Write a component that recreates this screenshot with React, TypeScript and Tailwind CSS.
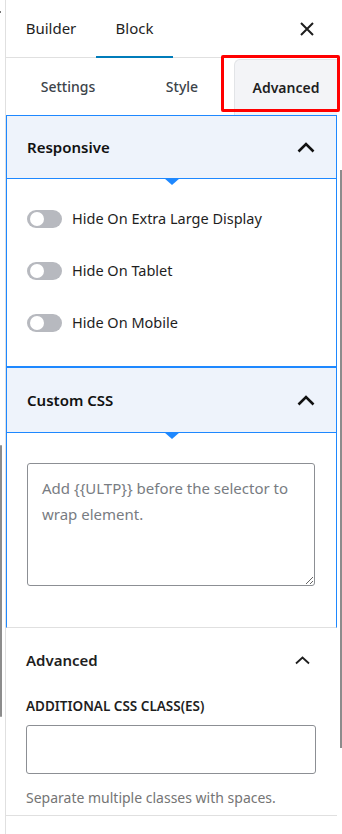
import { useState } from "react";

const toggles = ["Hide On Extra Large Display", "Hide On Tablet", "Hide On Mobile"];

function ChevronUp({ thin }: { thin?: boolean }) {
  if (thin) {
    return (
      <svg width="15" height="9" viewBox="0 0 15 9" fill="none">
        <polyline points="1,7.5 7.5,1.5 14,7.5" stroke="#1e1e1e" strokeWidth="1.8" />
      </svg>
    );
  }
  return (
    <svg width="18" height="11" viewBox="0 0 18 11" fill="none">
      <polyline points="1.5,9.5 9,2 16.5,9.5" stroke="#111" strokeWidth="2.6" />
    </svg>
  );
}

function Caret() {
  return (
    <div className="absolute top-full left-1/2 -translate-x-1/2 w-0 h-0 border-l-[8px] border-r-[8px] border-t-[7px] border-l-transparent border-r-transparent border-t-[#1e88ff]" />
  );
}

function Toggle({ label }: { label: string }) {
  const [on, setOn] = useState(false);
  return (
    <div className="flex items-center h-[18px]">
      <button
        onClick={() => setOn(!on)}
        className={`relative w-[35px] h-[18px] rounded-full ${on ? "bg-[#1e88ff]" : "bg-[#b7b9bf]"}`}
      >
        <span
          className={`absolute top-[2px] w-[14px] h-[14px] rounded-full bg-white ${on ? "left-[19px]" : "left-[3px]"}`}
        />
      </button>
      <span className="ml-[10px] text-[14.5px] text-[#1e1e1e]">{label}</span>
    </div>
  );
}

export default function App() {
  return (
    <div className="relative w-[342px] h-[834px] bg-white overflow-hidden font-['Noto_Sans',sans-serif] text-[#1e1e1e]">
      <div className="flex h-full">
        {/* left gutter */}
        <div className="w-[5px] flex flex-col">
          <div className="mt-[11px] h-[2px] w-[1px] bg-[#777]" />
          <div className="mt-[432px] h-[272px] w-[2px] bg-[#8c8c8c] rounded-sm" />
        </div>

        {/* main panel */}
        <div className="w-[332px] border-l border-[#e0e0e0] flex flex-col">
          {/* header */}
          <div className="h-[58px] border-b border-[#e0e0e0] flex items-stretch">
            <div className="w-[90px] flex items-center justify-center text-[15px] text-[#1e1e1e]">Builder</div>
            <div className="w-[77px] flex items-center justify-center text-[15px] text-[#1e1e1e] border-b-2 border-[#007cba] -mb-px">
              Block
            </div>
            <div className="flex-1 flex items-center justify-end pr-[23px]">
              <svg width="14" height="14" viewBox="0 0 14 14" fill="none">
                <path d="M1 1L13 13M13 1L1 13" stroke="#1e1e1e" strokeWidth="2" />
              </svg>
            </div>
          </div>

          {/* tabs */}
          <div className="h-[57px] flex items-stretch">
            <div className="w-[124px] flex items-center justify-center text-[14px] font-medium text-[#3c434a]">Settings</div>
            <div className="w-[104px] flex items-center justify-center text-[14px] font-medium text-[#3c434a]">Style</div>
            <div className="flex-1 mt-px flex items-center justify-center text-[14px] font-semibold text-[#1e1e1e] bg-[#f3f4f7] border-l border-t border-[#e2e4e7] rounded-tl-md">
              Advanced
            </div>
          </div>

          {/* Responsive */}
          <div className="w-[331px] border border-[#1e88ff] flex flex-col">
            <div className="relative h-[63px] bg-[#eef3fb] border-b border-[#1e88ff] flex items-center justify-between pl-[20px] pr-[21px]">
              <span className="text-[15px] font-semibold text-[#111]">Responsive</span>
              <ChevronUp />
              <Caret />
            </div>
            <div className="h-[187px] flex flex-col gap-[34px] pt-[31px] pl-[20px]">
              {toggles.map((t) => (
                <Toggle key={t} label={t} />
              ))}
            </div>
          </div>

          {/* Custom CSS */}
          <div className="w-[331px] border-l border-r border-t border-[#1e88ff] border-b border-b-[#e0e0e0] flex flex-col">
            <div className="relative h-[65px] bg-[#eef3fb] border-b border-[#1e88ff] flex items-center justify-between pl-[20px] pr-[21px]">
              <span className="text-[15px] font-semibold text-[#111]">Custom CSS</span>
              <ChevronUp />
              <Caret />
            </div>
            <div className="h-[194px] pt-[30px] pl-[20px]">
              <textarea
                className="block w-[288px] h-[123px] border border-[#8c8f94] rounded-[3px] pl-[14px] pr-[10px] pt-[11px] text-[15px] leading-[26px] text-[#1e1e1e] placeholder:text-[#787c82] outline-none resize-y"
                placeholder="Add {{ULTP}} before the selector to wrap element."
              />
            </div>
          </div>

          {/* Advanced */}
          <div className="w-[331px] h-[188px] border-b border-[#e0e0e0] flex flex-col px-[20px]">
            <div className="mt-[18px] h-[28px] flex items-center justify-between">
              <span className="text-[15px] font-semibold text-[#1e1e1e]">Advanced</span>
              <span className="mr-[7px] flex">
                <ChevronUp thin />
              </span>
            </div>
            <div className="mt-[23px] h-[18px] flex items-center text-[13.5px] font-semibold uppercase text-[#1e1e1e]">
              Additional CSS Class(es)
            </div>
            <input className="mt-[10px] w-[290px] h-[49px] border border-[#8c8f94] rounded-[3px] px-2 outline-none" />
            <div className="mt-[14px] h-[18px] flex items-center text-[14px] text-[#757575]">
              Separate multiple classes with spaces.
            </div>
          </div>
        </div>

        {/* right gutter */}
        <div className="w-[5px] flex flex-col">
          <div className="mt-[170px] ml-[3px] h-[578px] w-[2px] bg-[#8c8c8c]" />
        </div>
      </div>

      {/* highlight box */}
      <div className="absolute left-[221px] top-[55px] w-[119px] h-[57px] border-[3px] border-[#ff0000] rounded-[2px]" />
    </div>
  );
}
